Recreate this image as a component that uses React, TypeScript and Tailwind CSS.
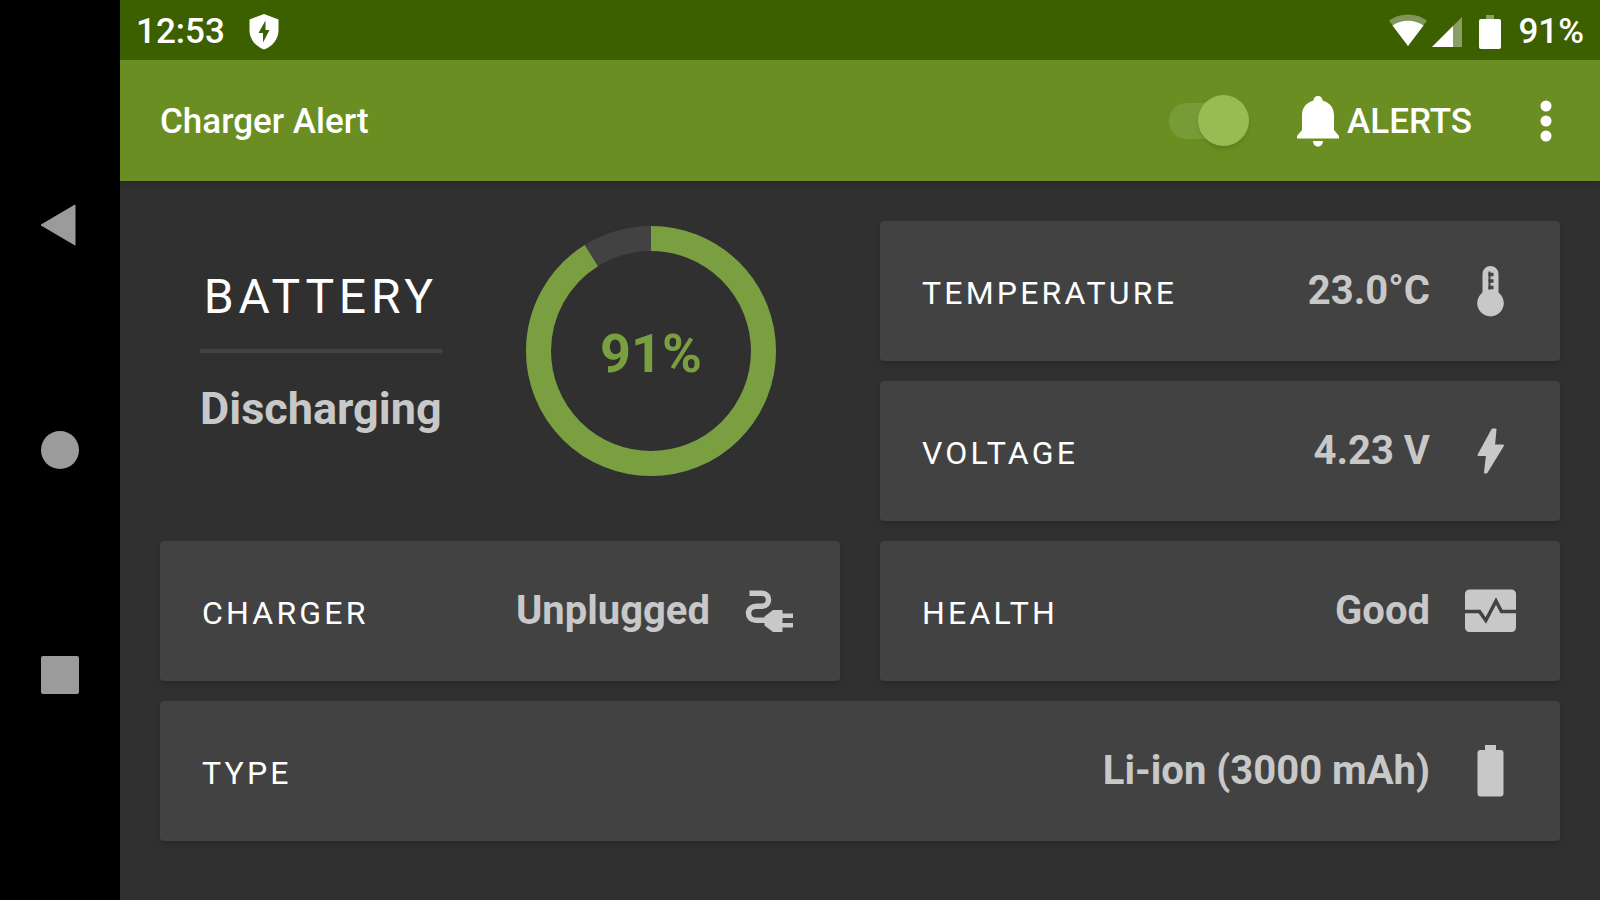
import React, { useState } from "react";

const ThermometerIcon = () => (
  <svg viewBox="0 0 60 60" className="size-15 shrink-0" aria-hidden="true">
    <path
      fill="currentColor"
      d="M22.500 13a8 8 0 0 1 16 0v18.500a13.300 13.300 0 1 1-16 0z"
    />
    <path stroke="#424242" strokeWidth="2" d="M29.500 10.500v18" />
    <path stroke="#424242" strokeWidth="3.500" d="M28.500 13.500h5M28.500 20h5M28.500 26.500h5" />
  </svg>
);

const BoltIcon = () => (
  <svg viewBox="0 0 60 60" className="size-15 shrink-0" aria-hidden="true">
    <path
      fill="currentColor"
      stroke="currentColor"
      strokeWidth="2"
      strokeLinejoin="round"
      d="M32.500 8.500 18.500 34h8.500l-2 17.500h1.500L43 24.500h-9l1.500-16z"
    />
  </svg>
);

const PlugIcon = () => (
  <svg viewBox="0 0 60 60" className="size-15 shrink-0" aria-hidden="true">
    <path
      fill="none"
      stroke="currentColor"
      strokeWidth="5.500"
      d="M9.500 12.300H22c4 0 6.500 3 6.500 6.500s-2.500 6.500-6.500 6.500h-5.500c-5 0-8 3-8 7s3 7 7.500 7H26"
    />
    <path fill="currentColor" d="M24.500 35.500 33 29h9.500v3.500H53V37H42.500v5H53v4.500H42.500V51H33l-8.500-6.500z" />
  </svg>
);

const HealthIcon = () => (
  <svg viewBox="0 0 60 60" className="size-15 shrink-0" aria-hidden="true">
    <rect x="5" y="8.500" width="51" height="42.500" rx="4.500" fill="currentColor" />
    <path
      fill="none"
      stroke="#424242"
      strokeWidth="3.500"
      d="M4 30.500h15.500l6.300 9L36 20l5.500 10.500H57"
    />
  </svg>
);

const BatteryIcon = () => (
  <svg viewBox="0 0 60 60" className="size-15 shrink-0" aria-hidden="true">
    <path
      fill="currentColor"
      d="M25 4h11v5h4.500a3 3 0 0 1 3 3v40.500a3 3 0 0 1-3 3h-20a3 3 0 0 1-3-3V12a3 3 0 0 1 3-3H25z"
    />
  </svg>
);

interface StatCardProps {
  label: string;
  value: string;
  icon: React.ReactNode;
  className?: string;
}

const StatCard: React.FC<StatCardProps> = ({ label, value, icon, className = "" }) => (
  <div
    className={`flex min-h-35 items-center gap-[30px] rounded-sm bg-[#424242] pr-10 pl-[42px] text-[#c8c8c8] shadow-md ${className}`}
  >
    <div className="flex flex-1 items-baseline justify-between pt-0.5">
      <h2 className="text-[32px] leading-[60px] tracking-widest text-white">{label}</h2>
      <p className="text-[40px] leading-[60px] font-bold">{value}</p>
    </div>
    {icon}
  </div>
);

const BatteryRing: React.FC<{ level: number }> = ({ level }) => {
  const radius = 112.5;
  const length = 2 * Math.PI * radius;

  return (
    <div className="grid size-[250px] place-items-center">
      <svg viewBox="0 0 250 250" className="col-start-1 row-start-1 size-full" aria-hidden="true">
        <g transform="rotate(-90 125 125)" fill="none" strokeWidth="25">
          <circle cx="125" cy="125" r={radius} stroke="#424242" />
          <circle
            cx="125"
            cy="125"
            r={radius}
            stroke="#7a9f41"
            strokeDasharray={`${(length * level) / 100} ${length}`}
          />
        </g>
      </svg>
      <p className="col-start-1 row-start-1 pt-1 text-[54px] font-bold text-[#7a9f41]">{level}%</p>
    </div>
  );
};

const App: React.FC = () => {
  const [enabled, setEnabled] = useState(true);
  const level = 91;

  return (
    <div className="flex min-h-screen bg-[#303030] font-[Roboto,sans-serif] text-white">
      {/* Navigation bar */}
      <nav className="sticky top-0 flex h-screen w-30 shrink-0 flex-col items-stretch justify-center bg-black text-[#9b9b9b]">
        <button aria-label="Back" className="flex h-1/4 items-center justify-center">
          <svg viewBox="0 0 42 42" className="size-[42px]">
            <path fill="currentColor" stroke="currentColor" strokeLinejoin="round" d="M36 1v40L2 21z" />
          </svg>
        </button>
        <button aria-label="Home" className="flex h-1/4 items-center justify-center">
          <span className="size-[38px] rounded-full bg-current" />
        </button>
        <button aria-label="Recent apps" className="flex h-1/4 items-center justify-center">
          <span className="size-[38px] rounded-xs bg-current" />
        </button>
      </nav>

      <div className="min-w-0 flex-1">
        {/* Status bar */}
        <div className="flex h-15 items-center justify-between bg-[#3c6000] px-4 pt-1 text-[35px] font-medium">
          <div className="flex items-center gap-6">
            <span>12:53</span>
            <svg viewBox="0 0 30 36" className="h-9 w-[30px]" aria-hidden="true">
              <path fill="#fff" d="M15 0 29.500 5.500V16c0 9-6 16.500-14.500 19.500C6.500 32.500.500 25 .500 16V5.500z" />
              <path fill="#3c6000" d="M16.500 6.500 9.500 19H14v9.500L20.500 16h-4z" />
            </svg>
          </div>
          <div className="flex items-center">
            <svg viewBox="0 0 40 36" className="h-9 w-10" aria-hidden="true">
              <path fill="#fff" fillOpacity="0.35" d="M20 32 1 6.500C12-1.500 28-1.500 39 6.500z" />
              <path fill="#fff" d="M20 32 4.500 11.500c9-6.500 22-6.500 31 0z" />
            </svg>
            <svg viewBox="0 0 30 36" className="ml-1 h-9 w-[30px]" aria-hidden="true">
              <path fill="#fff" fillOpacity="0.4" d="M30 3v30H0z" />
              <path fill="#fff" d="M21 12v21H0z" />
            </svg>
            <svg viewBox="0 0 24 36" className="ml-4 h-9 w-6" aria-hidden="true">
              <path fill="#fff" fillOpacity="0.4" d="M8 1h8v4H8z" />
              <rect x="1" y="5" width="22" height="30" rx="2" fill="#fff" />
            </svg>
            <span className="ml-4">{level}%</span>
          </div>
        </div>

        {/* App bar */}
        <header className="flex h-[121px] items-center justify-between bg-[#6b8e23] px-10 text-[35px] font-medium shadow-md">
          <h1 className="pt-1">Charger Alert</h1>
          <div className="flex items-center">
            <label className="relative flex h-[52px] w-20 cursor-pointer items-center">
              <input
                type="checkbox"
                role="switch"
                aria-label="Charger alert"
                checked={enabled}
                onChange={(e) => setEnabled(e.target.checked)}
                className="peer h-9 w-full appearance-none rounded-full bg-[#779c37]"
              />
              <span className="absolute left-0 size-[51px] rounded-full bg-[#9aba52] shadow-md peer-checked:right-0 peer-checked:left-auto" />
            </label>
            <button className="ml-12 flex items-center gap-2">
              <svg viewBox="0 0 42 52" className="h-[52px] w-[42px]" aria-hidden="true">
                <path
                  fill="#fff"
                  d="M21 1c2.800 0 4.500 2 4.500 4.500C33 7.500 37 13 37 20.500V35l5 6v2.500H0V41l5-6V20.500C5 13 9 7.500 16.500 5.500 16.500 3 18.200 1 21 1zM16 46h10c0 3-2 5.500-5 5.500S16 49 16 46z"
                />
              </svg>
              <span className="pt-1">ALERTS</span>
            </button>
            <button aria-label="More options" className="ml-[60px] flex w-7 justify-center">
              <svg viewBox="0 0 12 42" className="h-[42px] w-3" fill="#fff">
                <circle cx="6" cy="6" r="5.500" />
                <circle cx="6" cy="21" r="5.500" />
                <circle cx="6" cy="36" r="5.500" />
              </svg>
            </button>
          </div>
        </header>

        {/* Battery stats */}
        <main className="grid grid-cols-2 gap-x-10 gap-y-5 p-10">
          <section className="row-span-2 flex items-start justify-between pr-16 pl-10">
            <div className="flex h-[260px] flex-col justify-center pt-1">
              <h2 className="text-center text-5xl leading-[60px] tracking-widest">BATTERY</h2>
              <hr className="mt-[22px] mb-[26px] border-t-4 border-[#424242]" />
              <p className="text-[45px] leading-[60px] font-bold text-[#c8c8c8]">Discharging</p>
            </div>
            <div className="flex h-[260px] items-center">
              <BatteryRing level={level} />
            </div>
          </section>
          <StatCard label="TEMPERATURE" value="23.0°C" icon={<ThermometerIcon />} />
          <StatCard label="VOLTAGE" value="4.23 V" icon={<BoltIcon />} />
          <StatCard label="CHARGER" value="Unplugged" icon={<PlugIcon />} />
          <StatCard label="HEALTH" value="Good" icon={<HealthIcon />} />
          <StatCard label="TYPE" value="Li-ion (3000 mAh)" icon={<BatteryIcon />} className="col-span-2" />
        </main>
      </div>
    </div>
  );
};

export default App;
